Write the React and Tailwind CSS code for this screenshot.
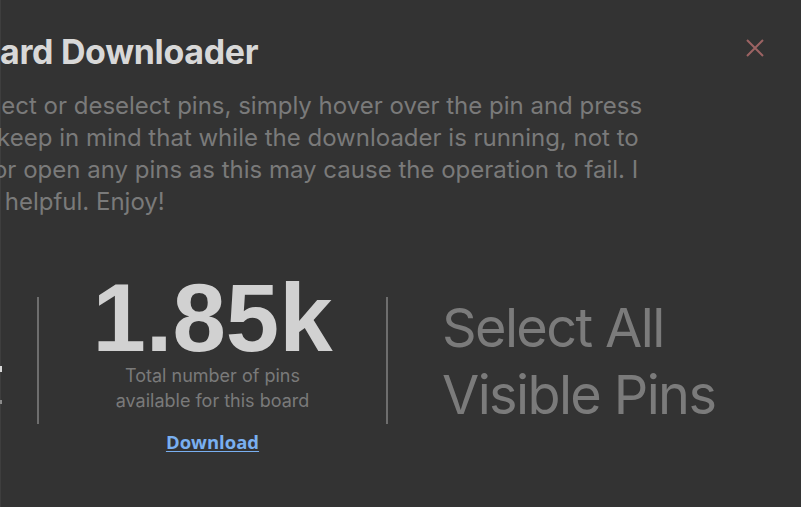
const Stat = () => (
    <div className="flex flex-col items-center w-[347px]">
        <div className="mt-[3px] font-['Liberation_Sans',Arial,sans-serif] font-bold text-[96px] leading-[90px] text-[#d1d1d1]">1.85k</div>
        <div className="text-center font-['Inter',sans-serif] text-[18px] leading-[25px] text-[#7a7a7a]">
            Total number of pins<br />available for this board
        </div>
        <a href="#" className="mt-[16px] font-['Open_Sans',sans-serif] font-bold text-[18.5px] leading-[26px] text-[#79aff0] underline underline-offset-2">
            Download
        </a>
    </div>
)

export default function App() {
    return (
        <div className="relative w-[801px] h-[507px] overflow-hidden bg-[#333333] flex">
            {/* edge of the panel behind */}
            <div className="w-[2px] shrink-0 border-l border-[#3e3e3e] flex flex-col">
                <div className="h-[366px]"></div>
                <div className="h-[6px] w-[2px] bg-[#d8d8d8] -ml-px"></div>
                <div className="h-[28px]"></div>
                <div className="h-[4px] w-[2px] bg-[#8a8a8a] -ml-px"></div>
            </div>

            <div className="-ml-[68px] shrink-0 flex flex-col pt-[31px] font-['Inter',sans-serif]">
                <h1 className="pl-[23px] text-[34px] leading-[42px] font-bold tracking-[-0.01em] text-[#d8d8d8] whitespace-nowrap">
                    Board Downloader
                </h1>
                <p className="mt-[17px] text-2xl text-[#7a7a7a] whitespace-nowrap">
                    To select or deselect pins, simply hover over the pin and press<br />
                    Also, keep in mind that while the downloader is running, not to<br />
                    click or open any pins as this may cause the operation to fail. I<br />
                    find it helpful. Enjoy!
                </p>

                <div className="mt-[52px] flex items-start">
                    <div className="w-[103px] shrink-0"></div>
                    <div className="mt-[27px] w-[2px] h-[127px] bg-[#6e6e6e] shrink-0"></div>
                    <Stat />
                    <div className="mt-[27px] w-[2px] h-[127px] bg-[#6e6e6e] shrink-0"></div>
                    <div className="mt-[27px] h-[127px] pl-[54px] flex items-center">
                        <button className="text-left text-[54px] leading-[67px] tracking-[-0.03em] text-[#7b7b7b] whitespace-nowrap">
                            Select All<br />Visible Pins
                        </button>
                    </div>
                </div>
            </div>

            <button className="absolute top-[39px] left-[746px] text-[#9c6363]">
                <svg width="18" height="18" viewBox="0 0 18 18" fill="none" stroke="currentColor" strokeWidth="2">
                    <path d="M1 1L17 17M17 1L1 17" />
                </svg>
            </button>
        </div>
    )
}
